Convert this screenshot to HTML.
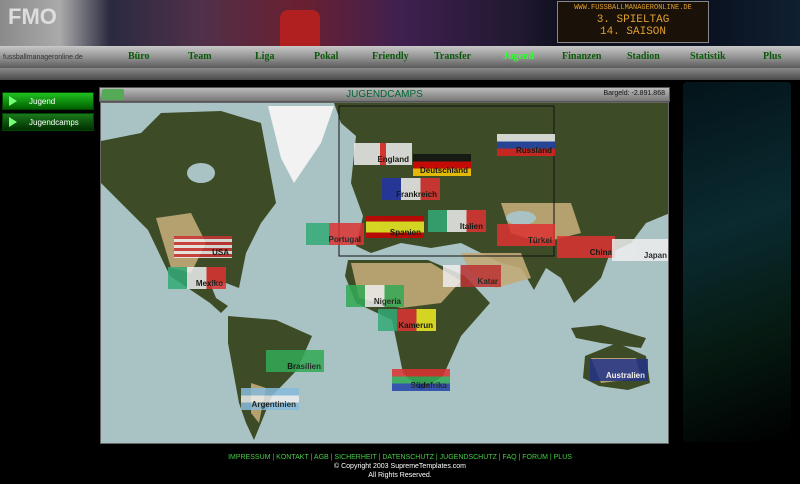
<!DOCTYPE html>
<html><head><meta charset="utf-8"><style>
*{margin:0;padding:0;box-sizing:border-box}
body{width:800px;height:484px;background:#000;overflow:hidden;position:relative;font-family:"Liberation Sans",sans-serif}
.hdr{position:absolute;left:0;top:0;width:800px;height:46px;background:linear-gradient(90deg,#8a8a8a 0,#aaa 60px,#2a2a40 110px,#50304a 200px,#6a2030 300px,#402050 400px,#201830 520px,#101020 560px,#0a1020 700px,#102030 800px)}
.nav{position:absolute;left:0;top:46px;width:800px;height:22px;background:linear-gradient(#c8c8c8,#8a8a8a 60%,#5a5a5a)}
.strip{position:absolute;left:0;top:68px;width:800px;height:12px;background:linear-gradient(#8a8a8a,#4a4a4a)}
.nav span{position:absolute;top:5px;font:bold 10px "Liberation Serif",serif;color:#0a5a0a}
.lcd{position:absolute;left:557px;top:1px;width:152px;height:42px;background:#1a1208;border:1px solid #888;color:#e0a030;font:11px "Liberation Mono",monospace;text-align:center;line-height:12px}
.btn{position:absolute;left:2px;width:92px;height:18px;background:linear-gradient(#20c020,#006000);border:1px solid #040;color:#fff;font-size:8px;padding:4px 0 0 26px}
.btn:before{content:"";position:absolute;left:6px;top:3px;border-left:8px solid #7f7;border-top:5px solid transparent;border-bottom:5px solid transparent}
.ph{position:absolute;left:99px;top:87px;width:571px;height:15px;background:linear-gradient(#bbb,#777);border:1px solid #555}
.map{position:absolute;left:100px;top:102px;width:569px;height:342px;background:#a9c3c4;border:1px solid #666;overflow:hidden}
.fl{position:absolute;height:22px;width:58px;font:bold 8px "Liberation Sans",sans-serif;color:#111;text-align:right;padding:12px 3px 0 0;opacity:.85}
.right{position:absolute;left:683px;top:82px;width:108px;height:360px;background:linear-gradient(160deg,#03141a,#0a2a30 40%,#061a12 70%,#000);border-radius:4px}
.foot{position:absolute;top:453px;width:800px;text-align:center;font-size:7px;color:#fff;line-height:9px}
</style></head><body>
<div class="hdr"><div style="position:absolute;left:8px;top:4px;font:bold 22px 'Liberation Sans';color:#ddd">FMO</div>
<div style="position:absolute;left:280px;top:10px;width:40px;height:36px;background:#b02020;border-radius:8px 8px 0 0"></div></div>
<div class="lcd"><div style="font-size:7px">WWW.FUSSBALLMANAGERONLINE.DE</div><div>3. SPIELTAG</div><div>14. SAISON</div></div>
<div class="nav">
<span style="left:3px;font:7px 'Liberation Sans';top:8px;color:#333">fussballmanageronline.de</span>
<span style="left:128px">Büro</span><span style="left:188px">Team</span><span style="left:255px">Liga</span><span style="left:314px">Pokal</span><span style="left:372px">Friendly</span><span style="left:434px">Transfer</span><span style="left:503px;color:#3f3">Jugend</span><span style="left:562px">Finanzen</span><span style="left:627px">Stadion</span><span style="left:690px">Statistik</span><span style="left:763px">Plus</span></div>
<div class="strip"></div>
<div class="right"></div>
<div class="btn" style="top:92px">Jugend</div>
<div class="btn" style="top:113px;background:linear-gradient(#1a7a1a,#003000)">Jugendcamps</div>
<div class="ph"><div style="position:absolute;left:2px;top:1px;width:22px;height:11px;background:#5a5;border-radius:2px"></div>
<div style="text-align:center;font-size:10px;color:#063;line-height:13px">JUGENDCAMPS</div>
<div style="position:absolute;right:4px;top:2px;font-size:7px;color:#111">Bargeld: -2.891.868</div></div>
<div class="map">
<svg width="569" height="342" style="position:absolute;left:0;top:0">
<g fill="#3d4c26">
<path d="M0 38 L40 30 L60 10 L120 8 L160 20 L175 100 L160 120 L145 150 L138 185 L125 180 L109 180 L115 195 L127 203 L120 210 L109 200 L69 173 L47 127 L0 80Z"/>
<path d="M127 213 L175 217 L211 233 L196 267 L171 293 L153 337 L145 320 L138 300 L127 240Z"/>
<path d="M233 0 L569 0 L569 110 L545 120 L530 140 L509 150 L500 175 L490 185 L473 200 L460 175 L445 165 L433 187 L420 165 L400 160 L380 150 L360 140 L330 145 L300 140 L270 150 L255 143 L262 113 L250 80 L255 33 L240 20Z"/>
<path d="M247 157 L327 157 L364 173 L389 200 L360 233 L342 273 L320 287 L302 270 L291 217 L255 200 L244 173Z"/>
<path d="M484 253 L516 240 L545 253 L549 280 L527 287 L498 283 L482 275Z"/>
<path d="M470 225 L500 222 L545 235 L540 245 L500 240 L475 235Z"/>
</g>
<g fill="#c2aa78" opacity=".9">
<path d="M250 160 L330 160 L360 178 L340 200 L300 205 L258 195Z"/>
<path d="M360 150 L420 150 L430 175 L395 185 L370 170Z"/>
<path d="M55 115 L90 110 L105 140 L90 170 L70 165Z"/>
<path d="M400 100 L470 100 L480 130 L440 140 L410 130Z"/>
<path d="M490 255 L535 255 L540 275 L500 280Z"/>
<path d="M150 280 L165 285 L158 320 L150 310Z"/>
</g>
<path d="M167 3 L233 3 L220 40 L193 80 L180 55Z" fill="#f2f2f2"/>
<ellipse cx="420" cy="115" rx="15" ry="7" fill="#a9c3c4"/>
<ellipse cx="100" cy="70" rx="14" ry="10" fill="#a9c3c4"/>
<path d="M238 3 L453 3 L453 153 L238 153Z" fill="none" stroke="#111" stroke-width="1"/>
</svg>
<div class="fl" style="left:253px;top:40px;background:linear-gradient(90deg,#eee 45%,#e33 45% 55%,#eee 55%)">England</div>
<div class="fl" style="left:312px;top:51px;background:linear-gradient(#111 33%,#d00 33% 66%,#fc0 66%)">Deutschland</div>
<div class="fl" style="left:281px;top:75px;background:linear-gradient(90deg,#23a 33%,#eee 33% 66%,#d33 66%)">Frankreich</div>
<div class="fl" style="left:396px;top:31px;background:linear-gradient(#eee 33%,#24a 33% 66%,#d22 66%)">Russland</div>
<div class="fl" style="left:265px;top:113px;background:linear-gradient(#c00 25%,#ee2 25% 75%,#c00 75%)">Spanien</div>
<div class="fl" style="left:327px;top:107px;background:linear-gradient(90deg,#3a7 33%,#eee 33% 66%,#d33 66%)">Italien</div>
<div class="fl" style="left:396px;top:121px;background:#d33">Türkei</div>
<div class="fl" style="left:205px;top:120px;background:linear-gradient(90deg,#3a7 40%,#d33 40%)">Portugal</div>
<div class="fl" style="left:73px;top:133px;background:repeating-linear-gradient(#c33 0 3px,#eee 3px 6px)">USA</div>
<div class="fl" style="left:67px;top:164px;background:linear-gradient(90deg,#3a7 33%,#eee 33% 66%,#d33 66%)">Mexiko</div>
<div class="fl" style="left:456px;top:133px;background:#d33">China</div>
<div class="fl" style="left:511px;top:136px;background:#eee">Japan</div>
<div class="fl" style="left:342px;top:162px;background:linear-gradient(90deg,#eee 30%,#b33 30%)">Katar</div>
<div class="fl" style="left:245px;top:182px;background:linear-gradient(90deg,#3a5 33%,#eee 33% 66%,#3a5 66%)">Nigeria</div>
<div class="fl" style="left:277px;top:206px;background:linear-gradient(90deg,#3a7 33%,#d33 33% 66%,#ee2 66%)">Kamerun</div>
<div class="fl" style="left:165px;top:247px;background:#3a5">Brasilien</div>
<div class="fl" style="left:140px;top:285px;background:linear-gradient(#8bd 33%,#eee 33% 66%,#8bd 66%)">Argentinien</div>
<div class="fl" style="left:291px;top:266px;background:linear-gradient(#d33 33%,#3a5 33% 66%,#24a 66%)">Südafrika</div>
<div class="fl" style="left:489px;top:256px;background:#238;color:#fff">Australien</div>
</div>
<div class="foot"><span style="color:#4c4">IMPRESSUM | KONTAKT | AGB | SICHERHEIT | DATENSCHUTZ | JUGENDSCHUTZ | FAQ | FORUM | PLUS</span><br>© Copyright 2003 SupremeTemplates.com<br>All Rights Reserved.</div>
</body></html>
